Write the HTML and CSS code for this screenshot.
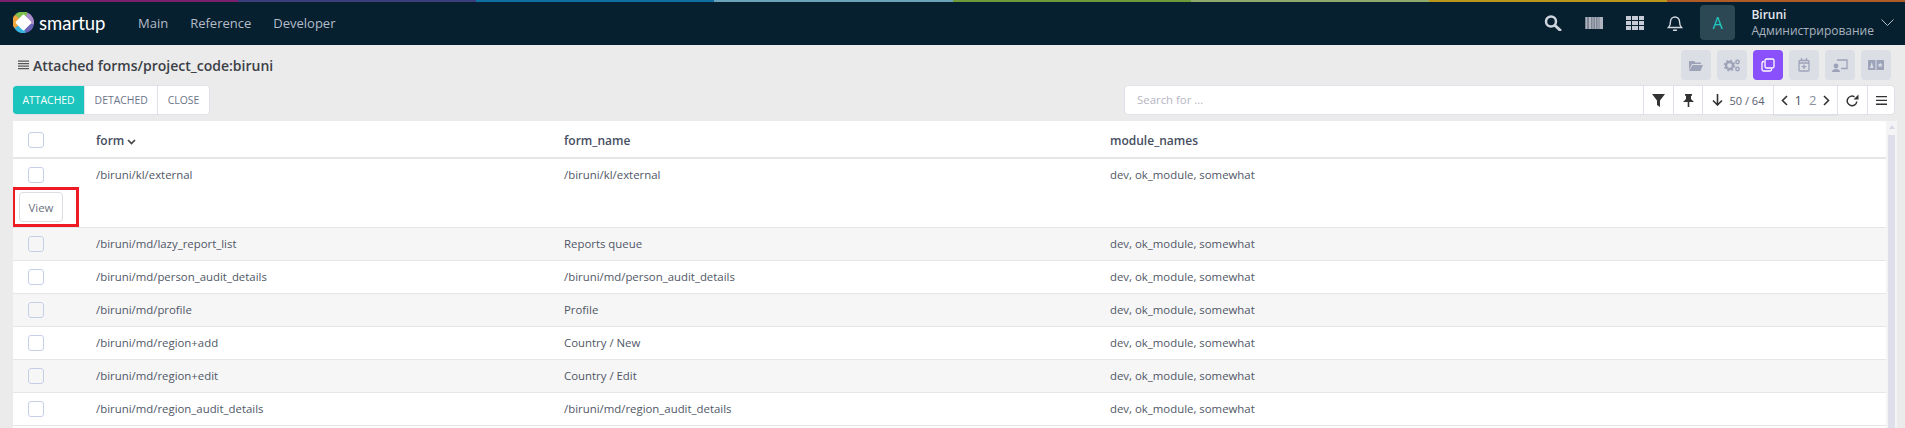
FILE: index.html
```html
<!DOCTYPE html>
<html lang="en">
<head>
  <meta charset="UTF-8" />
  <title>Attached forms</title>
  <link rel="stylesheet" href="styles.css">
</head>
<body>
  <div class="rainbow"><i class="c1"></i><i class="c2"></i><i class="c3"></i><i class="c4"></i><i class="c5"></i><i class="c6"></i><i class="c7"></i><i class="c8"></i></div>
  <header class="topbar">
    <div class="logo">
      <svg width="21" height="21" viewBox="0 0 20 20">
        <circle cx="10" cy="10" r="10" fill="#7b6cc4"/>
        <path d="M10 10L2 2.500A10 10 0 0 1 14 .8z" fill="#7fbf4d"/>
        <path d="M10 10L14 .8A10 10 0 0 1 19.800 12z" fill="#a98bc9"/>
        <path d="M10 10L2 2.500A10 10 0 0 0 1.500 15.500z" fill="#f0a63c"/>
        <path d="M10 10L1.500 15.500A10 10 0 0 0 12 19.800z" fill="#39b4dc"/>
        <path d="M10 10L12 19.800A10 10 0 0 0 19.800 12z" fill="#6a63b8"/>
        <path d="M10 3.800l6.200 6.200-6.200 6.200L3.800 10z" fill="#fff" stroke="#fff" stroke-width="2.500" stroke-linejoin="round"/>
      </svg>
      <span class="logo-text">smartup</span>
    </div>
    <nav class="nav">
      <a>Main</a>
      <a>Reference</a>
      <a>Developer</a>
    </nav>
    <div class="top-right">
      <div class="top-icons">
        <svg width="18" height="16" viewBox="0 0 18 16"><circle cx="7" cy="6.500" r="5" fill="none" stroke="#cfd4dc" stroke-width="2.500"/><path d="M11 10.500L16 15" stroke="#cfd4dc" stroke-width="3" stroke-linecap="round"/></svg>
        <svg width="18" height="12" viewBox="0 0 18 12"><rect width="18" height="12" fill="#7d8594"/><path d="M1 0h1v12H1zM4 0h2v12H4zM7.500 0h1v12h-1zM10 0h1v12h-1zM12.500 0h1v12h-1zM14.500 0h3.500v12h-3.500z" fill="#aeb4c0"/></svg>
        <svg width="18" height="14" viewBox="0 0 18 14" fill="#c6cbd6"><path d="M0 0h5v4H0zM6 0h6v4H6zM13 0h5v4h-5zM0 5h5v4H0zM6 5h6v4H6zM13 5h5v4h-5zM0 10h5v4H0zM6 10h6v4H6zM13 10h5v4h-5z"/></svg>
        <svg width="16" height="16" viewBox="0 0 16 16" fill="none" stroke="#d5d9e0" stroke-width="1.400"><path d="M1.500 12.500c1.500-1.500 2-3 2-6a4.500 4.500 0 0 1 9 0c0 3 .5 4.500 2 6z"/><path d="M6.500 15.300h3" stroke-linecap="round"/></svg>
      </div>
      <div class="avatar">A</div>
      <div class="user">
        <div class="user-name">Biruni</div>
        <div class="user-role">Администрирование</div>
      </div>
      <svg class="user-caret" width="13" height="7" viewBox="0 0 13 7" fill="none" stroke="#b9bfca" stroke-width="1"><path d="M.5.500l6 6 6-6"/></svg>
    </div>
  </header>

  <main class="page">
    <div class="title-row">
      <h1 class="title">
        <svg width="11" height="10" viewBox="0 0 11 10" fill="#555"><path d="M0 .500h11v1.200H0zM0 3h11v1.200H0zM0 5.500h11v1.200H0zM0 8h11v1.200H0z"/></svg>
        Attached forms/project_code:biruni
      </h1>
      <div class="tools">
        <span class="tool"><svg width="14" height="11" viewBox="0 0 14 11" fill="#9da3b8"><path d="M0 1h5l1.500 1.500H12V4H3L0 10zM3.500 5H14l-2.500 6H0z"/></svg></span>
        <span class="tool"><svg width="16" height="13" viewBox="0 0 16 13" fill="none" stroke="#9da3b8"><circle cx="5.500" cy="6.500" r="3.500" stroke-width="2.400"/><circle cx="5.500" cy="6.500" r="5" stroke-width="1.600" stroke-dasharray="2 1.930"/><circle cx="13.500" cy="3" r="1.700" stroke-width="1.500"/><circle cx="13.500" cy="10" r="1.700" stroke-width="1.500"/></svg></span>
        <span class="tool tool-on"><svg width="14" height="14" viewBox="0 0 14 14" fill="none" stroke="#fff" stroke-width="1.300"><rect x="4" y="1" width="9" height="9" rx="1.500"/><path d="M3 3.500H2.500A1.500 1.500 0 0 0 1 5v6.500A1.500 1.500 0 0 0 2.500 13H9a1.500 1.500 0 0 0 1.500-1.500V11"/></svg></span>
        <span class="tool"><svg width="12" height="14" viewBox="0 0 12 14" fill="none" stroke="#9da3b8" stroke-width="1.300"><rect x="1" y="2.500" width="10" height="10.500" rx="1"/><path d="M3.500 0v3M8.500 0v3M1 5h10M6 6.500v4.500M3.700 8.700h4.600"/></svg></span>
        <span class="tool"><svg width="16" height="13" viewBox="0 0 16 13" fill="#9da3b8"><circle cx="4" cy="7" r="2.400"/><path d="M0 13c0-2 1.500-3 4-3s4 1 4 3z"/><path d="M5 1h10v8.500H9" fill="none" stroke="#9da3b8" stroke-width="1.300"/></svg></span>
        <span class="tool"><svg width="16" height="10" viewBox="0 0 16 10"><path d="M0 0h7.500v10H0zM8.500 0H16v10H8.500z" fill="#9da3b8"/><path d="M3.700 2L5.500 8H2zM12.200 2.500l.8 1.700 1.700.1-1.300 1.200.5 1.800-1.700-1-1.700 1 .5-1.800-1.300-1.200 1.700-.1z" fill="#dcdee6"/></svg></span>
      </div>
    </div>

    <div class="action-row">
      <div class="btn-group">
        <button class="btn btn-on">ATTACHED</button>
        <button class="btn">DETACHED</button>
        <button class="btn">CLOSE</button>
      </div>
      <div class="search-bar">
        <div class="search">Search for ...</div>
        <span class="cell cell-filter"><svg width="13" height="13" viewBox="0 0 13 13" fill="#333"><path d="M0 0h13L8 6.500V13L5 11V6.500z"/></svg></span>
        <span class="cell cell-pin"><svg width="11" height="13" viewBox="0 0 11 13" fill="#333"><path d="M2 0h7v1.500L8 2v3l3 3H6.300v5h-1.600V8H0l3-3V2L2 1.500z"/></svg></span>
        <span class="cell cell-count"><svg width="11" height="12" viewBox="0 0 11 12" fill="none" stroke="#333" stroke-width="1.600"><path d="M5.500 0v11M1 6.500l4.500 4.500L10 6.500"/></svg>50 / 64</span>
        <span class="cell cell-pages">
          <svg width="7" height="11" viewBox="0 0 7 11" fill="none" stroke="#333" stroke-width="1.600"><path d="M6 1L1.500 5.500 6 10"/></svg>
          <b>1</b><em>2</em>
          <svg width="7" height="11" viewBox="0 0 7 11" fill="none" stroke="#333" stroke-width="1.600"><path d="M1 1l4.500 4.500L1 10"/></svg>
        </span>
        <span class="cell cell-reload"><svg width="13" height="13" viewBox="0 0 13 13"><path d="M10.800 7.500A4.800 4.800 0 1 1 8.500 2.800" fill="none" stroke="#333" stroke-width="1.500"/><path d="M12.500 .5v5h-5z" fill="#333"/></svg></span>
        <span class="cell cell-menu"><svg width="11" height="9" viewBox="0 0 11 9" fill="#333"><path d="M0 0h11v1.300H0zM0 3.800h11v1.300H0zM0 7.600h11v1.300H0z"/></svg></span>
      </div>
    </div>

    <section class="grid">
      <div class="grid-body">
        <div class="row row-head">
          <div class="col-check"><span class="check"></span></div>
          <div class="col-form">form <svg width="9" height="6" viewBox="0 0 9 6" fill="none" stroke="#444" stroke-width="1.700"><path d="M1 1l3.500 3.500L8 1"/></svg></div>
          <div class="col-name">form_name</div>
          <div class="col-mod">module_names</div>
        </div>
        <div class="row row-open">
          <div class="row-line">
            <div class="col-check"><span class="check"></span></div>
            <div class="col-form">/biruni/kl/external</div>
            <div class="col-name">/biruni/kl/external</div>
            <div class="col-mod">dev, ok_module, somewhat</div>
          </div>
          <div class="row-actions"><button class="view-btn">View</button></div>
          <div class="marker"></div>
        </div>
        <div class="row row-alt">
          <div class="col-check"><span class="check"></span></div>
          <div class="col-form">/biruni/md/lazy_report_list</div>
          <div class="col-name">Reports queue</div>
          <div class="col-mod">dev, ok_module, somewhat</div>
        </div>
        <div class="row">
          <div class="col-check"><span class="check"></span></div>
          <div class="col-form">/biruni/md/person_audit_details</div>
          <div class="col-name">/biruni/md/person_audit_details</div>
          <div class="col-mod">dev, ok_module, somewhat</div>
        </div>
        <div class="row row-alt">
          <div class="col-check"><span class="check"></span></div>
          <div class="col-form">/biruni/md/profile</div>
          <div class="col-name">Profile</div>
          <div class="col-mod">dev, ok_module, somewhat</div>
        </div>
        <div class="row">
          <div class="col-check"><span class="check"></span></div>
          <div class="col-form">/biruni/md/region+add</div>
          <div class="col-name">Country / New</div>
          <div class="col-mod">dev, ok_module, somewhat</div>
        </div>
        <div class="row row-alt">
          <div class="col-check"><span class="check"></span></div>
          <div class="col-form">/biruni/md/region+edit</div>
          <div class="col-name">Country / Edit</div>
          <div class="col-mod">dev, ok_module, somewhat</div>
        </div>
        <div class="row">
          <div class="col-check"><span class="check"></span></div>
          <div class="col-form">/biruni/md/region_audit_details</div>
          <div class="col-name">/biruni/md/region_audit_details</div>
          <div class="col-mod">dev, ok_module, somewhat</div>
        </div>
      </div>
      <div class="scroll"><span class="scroll-up"></span><span class="scroll-track"></span></div>
    </section>
  </main>
</body>
</html>
```

FILE: styles.css
```css
html, body {
  height: 428px;
  overflow: hidden;
}
body {
  margin: 0;
  font-family: "Open Sans", "Noto Sans", sans-serif;
  font-size: 11.4px;
  color: #505766;
  background: #ebebeb;
}

.rainbow {
  display: flex;
  height: 2px;
}
.rainbow i { flex: 1; }
.rainbow .c1 { background: #7a1f6e; }
.rainbow .c2 { background: #3a3f7c; }
.rainbow .c3 { background: #0f6fa0; }
.rainbow .c4 { background: #6ba3bb; }
.rainbow .c5 { background: #6f9a3a; }
.rainbow .c6 { background: #8fa96a; }
.rainbow .c7 { background: #b8961a; }
.rainbow .c8 { background: #b05a26; }

.topbar {
  display: flex;
  align-items: center;
  height: 43px;
  box-sizing: border-box;
  background: #062030;
  padding: 0 11px 2px 13px;
}
.logo {
  display: flex;
  align-items: center;
  gap: 5px;
  width: 125px;
}
.logo-text {
  font-family: "Lato", sans-serif;
  font-size: 18.5px;
  font-weight: 400;
  color: #fff;
}
.nav {
  display: flex;
  gap: 22px;
}
.nav a {
  font-size: 13px;
  color: #b4bcc8;
}
.top-right {
  display: flex;
  align-items: center;
  margin-left: auto;
}
.top-icons {
  display: flex;
  align-items: center;
  gap: 23px;
}
.avatar {
  width: 35px;
  height: 35px;
  border-radius: 4px;
  background: #2c4854;
  color: #1ec8c0;
  font-size: 16px;
  display: flex;
  align-items: center;
  justify-content: center;
  margin-left: 17px;
}
.user {
  margin: 1px 0 0 16px;
  font-size: 12px;
  line-height: 16px;
}
.user-name { color: #e4e7ec; font-weight: 600; }
.user-role { color: #aab2bf; }
.user-caret { margin-left: 7px; }

.page { padding: 0 8px 0 13px; }

.title-row {
  display: flex;
  align-items: center;
  justify-content: space-between;
  height: 30px;
  margin-top: 5px;
  padding-right: 6px;
}
.title {
  display: flex;
  align-items: center;
  gap: 4px;
  margin: 0 0 0 5px;
  font-size: 14px;
  font-weight: 600;
  color: #3c3f46;
}
.tools {
  display: flex;
  gap: 6px;
}
.tool {
  width: 30px;
  height: 30px;
  border-radius: 4px;
  background: #dcdee6;
  display: flex;
  align-items: center;
  justify-content: center;
}
.tool-on { background: #8950fc; }

.action-row {
  display: flex;
  justify-content: space-between;
  height: 30px;
  margin: 5px 2px 0 0;
}
.btn-group {
  display: flex;
  background: #fff;
  border-radius: 4px;
  border: 1px solid #dfe1e8;
  border-left: 0;
  overflow: hidden;
}
.btn {
  border: 0;
  border-left: 1px solid #dfe1e8;
  background: #fff;
  font: 400 10.4px "Open Sans", sans-serif;
  color: #6b7488;
  padding: 0 9.5px;
}
.btn-on {
  border-left: 0;
  background: #1bc5bd;
  color: #fff;
}

.search-bar {
  display: flex;
  box-sizing: border-box;
  background: #fff;
  border-radius: 4px;
  border: 1px solid #dfe1e8;
  height: 30px;
}
.search {
  width: 518px;
  box-sizing: border-box;
  padding-left: 12px;
  line-height: 28px;
  color: #b5b5c3;
}
.cell {
  display: flex;
  align-items: center;
  justify-content: center;
  box-sizing: border-box;
  border-left: 1px solid #dfe1e8;
  height: 28px;
}
.cell-filter { width: 30px; }
.cell-pin { width: 29px; }
.cell-count {
  width: 71px;
  gap: 7px;
  color: #5a6070;
  font-size: 11px;
}
.cell-pages {
  width: 64px;
  gap: 7px;
  font-size: 13px;
  box-shadow: 0 2px 0 #dfe1e8;
}
.cell-pages b { font-weight: 400; color: #4d5464; }
.cell-pages em { font-style: normal; color: #8a8f9c; }
.cell-reload { width: 30px; }
.cell-menu { width: 27px; }

.grid {
  display: flex;
  margin-top: 6px;
  height: 307px;
  background: #fff;
  overflow: hidden;
}
.grid-body { flex: 1; }
.row {
  display: flex;
  align-items: center;
  height: 33px;
  box-sizing: border-box;
  border-bottom: 1px solid #e6e6e6;
  position: relative;
}
.row-alt { background: #f6f6f6; }
.row-alt .check { background: transparent; }
.row-head {
  height: 38px;
  padding-top: 2px;
  border-bottom: 2px solid #e6e6e6;
  font-size: 12px;
  font-weight: 600;
  color: #464e5f;
}
.col-check {
  width: 83px;
  padding-left: 15px;
  box-sizing: border-box;
  flex: none;
}
.col-form { width: 468px; flex: none; }
.col-name { width: 546px; flex: none; }
.row:not(.row-head) .col-form,
.row:not(.row-head) .col-name,
.row:not(.row-head) .col-mod {
  padding-bottom: 2px;
}
.check {
  display: block;
  width: 16px;
  height: 16px;
  box-sizing: border-box;
  border: 1px solid #c5d0e8;
  border-radius: 3px;
  background: #fff;
}

.row-open {
  display: block;
  height: 69px;
}
.row-line {
  display: flex;
  align-items: center;
  height: 32px;
}
.row-actions { padding: 1px 0 0 6px; }
.view-btn {
  display: block;
  width: 44px;
  height: 30px;
  border: 1px solid #dcdde2;
  border-radius: 4px;
  background: #fff;
  font: 400 11.4px "Open Sans", sans-serif;
  color: #6b7280;
  padding: 0;
}
.marker {
  position: absolute;
  left: -1px;
  top: 28px;
  width: 61px;
  height: 34px;
  border: 3px solid #ed1c24;
  pointer-events: none;
}

.scroll {
  width: 11px;
  padding: 0 2px;
  box-sizing: border-box;
  background: #f4f4f7;
  display: flex;
  flex-direction: column;
  flex: none;
}
.scroll-up {
  width: 0;
  height: 0;
  margin: 4px 0 6px 0.5px;
  border: 3px solid transparent;
  border-top: 0;
  border-bottom: 4px solid #d6d6e6;
  flex: none;
}
.scroll-track {
  flex: 1;
  background: #dfdfec;
}
```
